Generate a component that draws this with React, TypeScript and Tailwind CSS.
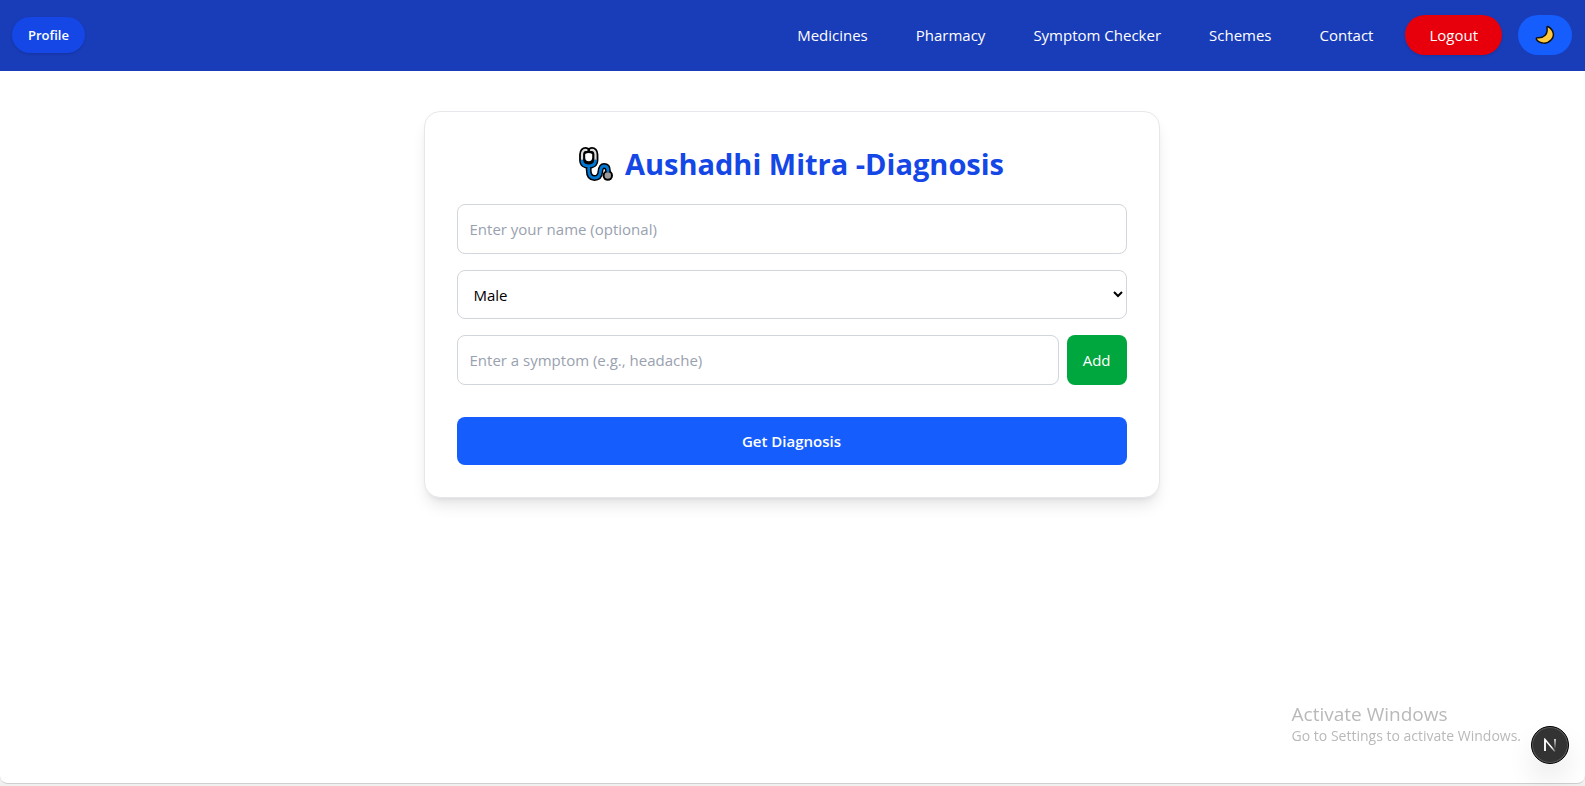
import { useState } from "react";

const links = ["Medicines", "Pharmacy", "Symptom Checker", "Schemes", "Contact"];

function Stethoscope() {
  return (
    <svg viewBox="0 0 34 34" className="size-[34px] shrink-0" fill="none" strokeLinecap="round" strokeLinejoin="round" aria-hidden="true">
      <g stroke="#000" strokeWidth="5.800">
        <path d="M7.500 3 C4.500 2.500 3 4.500 3 7.500 V13 C3 17 6 19 9.700 19 C13.500 19 16.500 17 16.500 13 V7.500 C16.500 4.500 15 2.500 12 3" />
        <path d="M9.700 19 V23 C9.700 28 11.500 31 15.500 31 C20 31 21 28 21.300 25 C21.700 21 22.500 19 25 19 C27.500 19 29 20.500 29 24 V27" />
      </g>
      <path d="M4 4 H15.500 V18 H4Z" fill="#000" />
      <circle cx="28.800" cy="28.500" r="5.200" fill="#000" />
      <path d="M6.200 7 Q9.700 5 13.200 7 V11 Q12.800 14.300 9.700 14.300 Q6.600 14.300 6.200 11Z" fill="#fff" />
      <path d="M7.500 3 C4.500 2.500 3 4.500 3 7.500 V13 M12 3 C15 2.500 16.500 4.500 16.500 7.500 V13" stroke="#dedede" strokeWidth="2.200" />
      <path d="M3 14 C3.500 17.500 6 19 9.700 19 C13.500 19 16 17.500 16.500 14 M9.700 19 V23 C9.700 28 11.500 31 15.500 31 C20 31 21 28 21.300 25 C21.700 21 22.500 19 25 19 C27.500 19 29 20.500 29 24" stroke="#0078d4" strokeWidth="2.800" />
      <circle cx="28.800" cy="28.500" r="3.200" fill="#9b9b9b" />
    </svg>
  );
}

function Moon() {
  return (
    <svg viewBox="0 0 20 20" className="size-5" aria-hidden="true">
      <path d="M13 1.500 C19 5 20 11 16 15 C12 19.500 5 19 1.500 14.500 C1 13.500 1.500 12.500 3 12.700 C9 13 13 9 12 3 C11.800 1.800 12.300 1.200 13 1.500Z" fill="#ffc83d" stroke="#111" strokeWidth="1.500" strokeLinejoin="round" />
    </svg>
  );
}

export default function App() {
  const [symptom, setSymptom] = useState("");
  const [name, setName] = useState("");
  const field = "rounded-lg border border-gray-300 bg-white text-black placeholder:text-gray-400";

  return (
    <div className="flex min-h-screen flex-col bg-[#f0f0f0] font-['Segoe_UI','Open_Sans',sans-serif] text-[15px] leading-6">
      <div className="mb-0.5 flex grow flex-col overflow-hidden rounded-b-lg border-b border-[#cfcfcf] bg-white">
        <nav className="flex items-center justify-between bg-blue-800 pt-[15px] pr-[13px] pb-4 pl-3 text-white">
          <button type="button" className="-mt-px h-9 rounded-full bg-blue-700 px-4 text-[13px] font-semibold shadow-sm">Profile</button>
          <div className="flex items-center gap-4">
            {links.map((label) => (
              <a key={label} href="#" className="px-4 font-medium">{label}</a>
            ))}
            <button type="button" className="h-10 rounded-full bg-red-600 px-6 font-medium shadow-sm">Logout</button>
            <button type="button" aria-label="Toggle dark mode" className="flex h-10 w-[54px] items-center justify-center rounded-full bg-blue-600">
              <Moon />
            </button>
          </div>
        </nav>

        <main className="pt-10 pr-[18px] pl-4">
          <form onSubmit={(e) => e.preventDefault()} className="mx-auto flex max-w-[736px] flex-col rounded-2xl border border-gray-200 bg-white px-8 pt-8 pb-8 shadow-lg">
            <h1 className="mb-5 flex h-10 items-center justify-center gap-3 text-[29px] font-bold text-blue-700">
              <Stethoscope />
              Aushadhi Mitra -Diagnosis
            </h1>
            <input aria-label="Name" value={name} onChange={(e) => setName(e.target.value)} placeholder="Enter your name (optional)" className={`${field} mb-4 h-[50px] w-full px-3`} />
            <select aria-label="Gender" className={`${field} mb-4 h-[49px] w-full px-3`}>
              <option>Male</option>
              <option>Female</option>
              <option>Other</option>
            </select>
            <div className="mb-8 flex gap-2">
              <input aria-label="Symptom" value={symptom} onChange={(e) => setSymptom(e.target.value)} placeholder="Enter a symptom (e.g., headache)" className={`${field} h-[50px] min-w-0 grow px-3`} />
              <button type="button" className="rounded-lg bg-green-600 px-4 font-medium text-white">Add</button>
            </div>
            <button type="submit" className="h-12 rounded-lg bg-blue-600 font-semibold text-white">Get Diagnosis</button>
          </form>
        </main>
      </div>

      <div className="pointer-events-none fixed right-16 bottom-10 text-[#b9b9b9]">
        <p className="text-[19px] leading-6">Activate Windows</p>
        <p className="text-[14px] leading-5">Go to Settings to activate Windows.</p>
      </div>
      <button type="button" aria-label="Open developer tools" className="fixed right-4 bottom-[22px] flex size-[38px] items-center justify-center rounded-full border border-black bg-[#333] shadow-[0_16px_32px_-8px_rgba(0,0,0,0.24)] ring-1 ring-white/20 ring-inset">
        <svg viewBox="0 0 14 14" className="size-3.5" fill="none" strokeWidth="1.500" aria-hidden="true">
          <defs>
            <linearGradient id="diagonal" gradientUnits="userSpaceOnUse" x1="9" y1="9" x2="13" y2="15">
              <stop stopColor="#fff" />
              <stop offset="1" stopColor="#fff" stopOpacity="0" />
            </linearGradient>
            <linearGradient id="stem" gradientUnits="userSpaceOnUse" x1="12" y1="1" x2="12" y2="11">
              <stop stopColor="#fff" />
              <stop offset="1" stopColor="#fff" stopOpacity="0" />
            </linearGradient>
          </defs>
          <path d="M2 13V1.500L12 13.500" stroke="url(#diagonal)" />
          <path d="M2 13V1.500" stroke="#fff" />
          <path d="M12 1V11" stroke="url(#stem)" />
        </svg>
      </button>
    </div>
  );
}
